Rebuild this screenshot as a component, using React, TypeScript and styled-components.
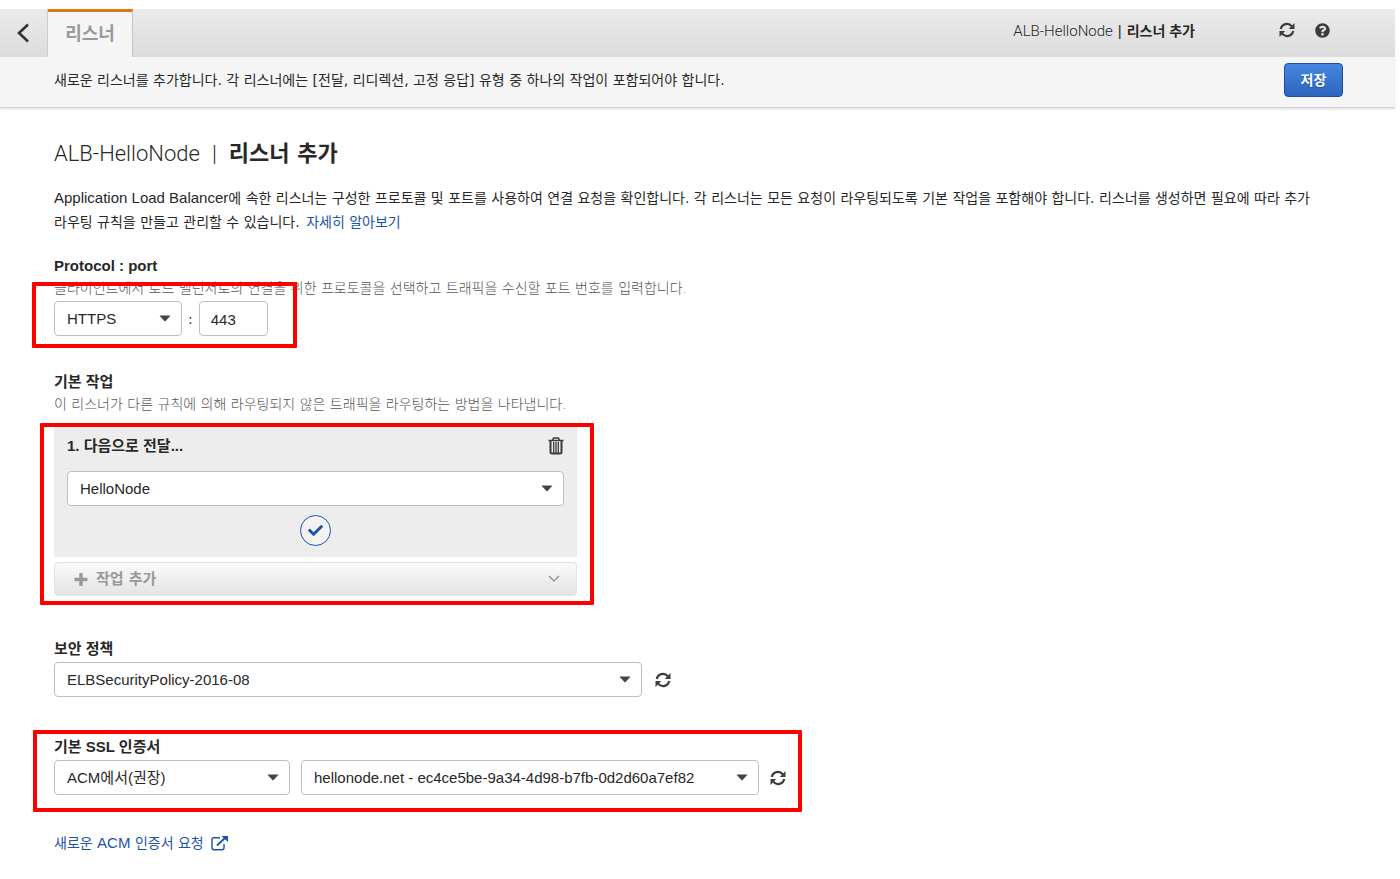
import React from 'react';
import styled, { createGlobalStyle } from 'styled-components';
import { FaQuestionCircle, FaCheck } from 'react-icons/fa';

const FONT = '"DejaVu Sans", "Noto Sans CJK KR", sans-serif';
const LATIN = '"Liberation Sans", "Noto Sans CJK KR", sans-serif';
const THIN = 'Roboto, "Noto Sans CJK KR", sans-serif';
const INK = '#282828';
const LINK = '#1a53ab';

const GlobalStyle = createGlobalStyle`
  * { box-sizing: border-box; }
  body { margin: 0; background: #fff; color: ${INK}; font: 14px/24px ${FONT}; }
  button, input, select { font: inherit; color: inherit; }
  h1, h2, p { margin: 0; }
`;

const Page = styled.div`
  padding: 9px 5px 24px 0;
`;

const TopBar = styled.header`
  display: flex;
  height: 48px;
  background: linear-gradient(#ebebeb, #dcdcdc);
`;

const IconButton = styled.button`
  display: inline-flex;
  align-items: center;
  justify-content: center;
  min-height: 24px;
  padding: 0;
  border: 0;
  background: none;
  color: #3c3c3c;
  cursor: pointer;
`;

const BackButton = styled(IconButton)`
  width: 48px;
  border-right: 1px solid #ccc;
`;

const Tab = styled.a`
  width: 85px;
  padding-top: 8px;
  border-top: 3px solid #d9771a;
  border-right: 1px solid #c4c4c4;
  background: #f5f5f5;
  color: #999;
  font-size: 18px;
  font-weight: 700;
  line-height: 28px;
  text-align: center;
  text-decoration: none;
`;

const Crumb = styled.div`
  display: flex;
  gap: 5px;
  margin: 10px 84px 0 auto;
  font-family: ${LATIN};
  font-size: 15px;
`;

const ThinText = styled.span`
  font-family: ${THIN};
  font-weight: 300;
`;

const CrumbPage = styled.b`
  font-size: 14px;
`;

const TopActions = styled.div`
  display: flex;
  align-items: flex-start;
  gap: 20px;
  padding: 9px 65px 0 0;
`;

const Notice = styled.div`
  display: flex;
  align-items: center;
  justify-content: space-between;
  height: 51px;
  padding: 0 52px 4px 54px;
  border-bottom: 1px solid #d4d4d4;
  background: #f5f5f5;
  box-shadow: 0 1px 2px #ddd;
`;

const SaveButton = styled.button`
  width: 59px;
  height: 34px;
  border: 1px solid #1d4f9c;
  border-radius: 4px;
  background: linear-gradient(#4687e2, #2c65bd);
  color: #fff;
  font-weight: 700;
  text-shadow: 0 1px 1px #1d4f9c;
  cursor: pointer;
`;

const Main = styled.main`
  padding: 30px 56px 0 54px;
`;

const Title = styled.h1`
  display: flex;
  gap: 12px;
  font-size: 22px;
  font-weight: 700;
  line-height: 32px;
`;

const Intro = styled.p`
  margin-top: 16px;
  word-break: keep-all;
`;

const Latin = styled.span`
  font-family: ${LATIN};
  font-size: 15px;
  line-height: 22px;
`;

const Link = styled.a`
  color: ${LINK};
  text-decoration: none;
`;

const LearnMore = styled(Link)`
  margin-left: 2px;
`;

const Section = styled.section<{ $gap: number }>`
  position: relative;
  width: fit-content;
  margin-top: ${(p) => p.$gap}px;
`;

const Heading = styled.h2`
  display: block;
  font-family: ${LATIN};
  font-size: 15px;
  font-weight: 700;
  line-height: 22px;
`;

const Hint = styled.p`
  color: #555;
  font-weight: 300;
  line-height: 22px;
`;

const Marker = styled.div<{ $inset: string; $width?: number }>`
  position: absolute;
  inset: ${(p) => p.$inset};
  width: ${(p) => (p.$width ? `${p.$width}px` : 'auto')};
  border: 4px solid #f00;
  border-radius: 1px;
  pointer-events: none;
`;

const Row = styled.div<{ $gap: number }>`
  display: flex;
  align-items: center;
  gap: ${(p) => p.$gap}px;
  margin-top: 2px;
`;

const SelectBox = styled.span<{ $width: number }>`
  display: grid;
  grid-template: 35px / 1fr;
  align-items: center;
  width: ${(p) => p.$width}px;
  max-width: 100%;
  & > * { grid-area: 1 / 1; }
  & > svg { justify-self: end; margin-right: 11px; pointer-events: none; }
`;

const NativeSelect = styled.select`
  width: 100%;
  height: 100%;
  padding: 0 30px 0 12px;
  border: 1px solid #c0c0c0;
  border-radius: 4px;
  background: #fff;
  font-family: ${LATIN};
  font-size: 15px;
  appearance: none;
`;

const PortInput = styled.input`
  width: 69px;
  height: 35px;
  padding: 2px 11px 0;
  border: 1px solid #c0c0c0;
  border-radius: 4px;
  font-family: ${LATIN};
  font-size: 15px;
`;

const ActionCard = styled.div`
  width: 523px;
  height: 130px;
  margin-top: 12px;
  padding: 7px 13px 0;
  background: #ededed;
`;

const CardHead = styled.div`
  display: flex;
  align-items: flex-start;
  justify-content: space-between;
  height: 37px;
  font-family: ${LATIN};
  font-size: 15px;
  font-weight: 700;
`;

const ConfirmButton = styled.button`
  display: flex;
  align-items: center;
  justify-content: center;
  width: 31px;
  height: 31px;
  margin: 9px auto 0;
  padding: 0;
  border: 1px solid ${LINK};
  border-radius: 50%;
  background: #f3f3f3;
  color: ${LINK};
`;

const AddButton = styled.button`
  display: flex;
  align-items: center;
  gap: 8px;
  width: 523px;
  height: 34px;
  margin-top: 5px;
  padding: 0 16px 0 19px;
  border: 1px solid #e2e2e2;
  border-radius: 4px;
  background: linear-gradient(#fafafa, #e4e4e4);
  color: #999;
  font-size: 15px;
  font-weight: 700;
  & > svg:last-child { margin-left: auto; }
`;

const RequestLink = styled(Link)`
  display: flex;
  align-items: center;
  gap: 7px;
`;

const Refresh = () => (
  <svg width="16" height="16" viewBox="0 0 16 16" fill="none" stroke="currentColor" strokeWidth="2.200" aria-hidden="true">
    <path d="M1.800 7A6.200 6.200 0 0 1 12.800 4.400M14.200 9A6.200 6.200 0 0 1 3.200 11.600" />
    <path d="M15.500 1v6H9.800zM.5 15V9h5.700z" fill="currentColor" stroke="none" />
  </svg>
);

const Caret = () => (
  <svg width="12" height="7" viewBox="0 0 12 7" aria-hidden="true">
    <path d="M1 .5h10q.6 0 .2.6L6.600 6q-.6.6-1.200 0L.8 1.100Q.4.5 1 .5z" fill="#444" />
  </svg>
);

const Plus = () => (
  <svg width="14" height="14" viewBox="0 0 14 14" aria-hidden="true">
    <path d="M7 1v13M.5 7.500h13" stroke="currentColor" strokeWidth="3.400" />
  </svg>
);

const Trash = () => (
  <svg width="16" height="18" viewBox="0 0 16 18" fill="none" stroke="#3c3c3c" aria-hidden="true">
    <path d="M.5 3.500h15M5 3.500V2q0-1 1-1h4q1 0 1 1v1.500" strokeWidth="1.500" />
    <path d="M2.500 4v11q0 1.500 1.500 1.500h8q1.500 0 1.500-1.500V4" strokeWidth="2" />
    <path d="M5.700 5v11M8 5v11M10.300 5v11" strokeWidth="1.300" />
  </svg>
);

const External = () => (
  <svg width="17" height="15" viewBox="0 0 17 15" fill="none" stroke="currentColor" strokeWidth="1.400" aria-hidden="true">
    <path d="M9 1.700H3Q1 1.700 1 3.700v8q0 2 2 2h8q2 0 2-2V8" />
    <path d="M6 9.500l8-7.500" strokeWidth="1.800" />
    <path d="M10.500 0H17v6z" fill="currentColor" stroke="none" />
  </svg>
);

type SelectProps = { id?: string; label?: string; width: number; value: string };

const Select = ({ id, label, width, value }: SelectProps) => (
  <SelectBox $width={width}>
    <NativeSelect id={id} aria-label={label} defaultValue={value}>
      <option>{value}</option>
    </NativeSelect>
    <Caret />
  </SelectBox>
);

export default function App() {
  return (
    <>
      <GlobalStyle />
      <Page>
        <TopBar>
          <BackButton aria-label="뒤로">
            <svg width="16" height="20" viewBox="0 0 16 20" fill="none" stroke="#333" strokeWidth="2.600">
              <path d="M12 1.500L3 10l9 8.500" />
            </svg>
          </BackButton>
          <Tab href="#listeners">리스너</Tab>
          <Crumb>
            <ThinText>ALB-HelloNode</ThinText>
            <span>|</span>
            <CrumbPage>리스너 추가</CrumbPage>
          </Crumb>
          <TopActions>
            <IconButton aria-label="새로 고침"><Refresh /></IconButton>
            <IconButton aria-label="도움말"><FaQuestionCircle size={15} /></IconButton>
          </TopActions>
        </TopBar>
        <Notice>
          <p>새로운 리스너를 추가합니다. 각 리스너에는 [전달, 리디렉션, 고정 응답] 유형 중 하나의 작업이 포함되어야 합니다.</p>
          <SaveButton>저장</SaveButton>
        </Notice>
        <Main>
          <Title>
            <ThinText>ALB-HelloNode</ThinText>
            <ThinText>|</ThinText>
            <span>리스너 추가</span>
          </Title>
          <Intro>
            <Latin>Application Load Balancer</Latin>에 속한 리스너는 구성한 프로토콜 및 포트를 사용하여 연결 요청을 확인합니다. 각 리스너는 모든 요청이 라우팅되도록 기본 작업을 포함해야 합니다. 리스너를 생성하면 필요에 따라 추가 라우팅 규칙을 만들고 관리할 수 있습니다. <LearnMore href="#learn">자세히 알아보기</LearnMore>
          </Intro>

          <Section $gap={21}>
            <Heading>Protocol : port</Heading>
            <Hint>클라이언트에서 로드 밸런서로의 연결을 위한 프로토콜을 선택하고 트래픽을 수신할 포트 번호를 입력합니다.</Hint>
            <Row $gap={6}>
              <Select label="Protocol" width={128} value="HTTPS" />
              <span>:</span>
              <PortInput aria-label="port" defaultValue="443" />
            </Row>
            <Marker $inset="27px auto -12px -22px" $width={265} />
          </Section>

          <Section $gap={35}>
            <Heading>기본 작업</Heading>
            <Hint>이 리스너가 다른 규칙에 의해 라우팅되지 않은 트래픽을 라우팅하는 방법을 나타냅니다.</Hint>
            <ActionCard>
              <CardHead>
                <span>1. 다음으로 전달...</span>
                <IconButton aria-label="삭제"><Trash /></IconButton>
              </CardHead>
              <Select label="대상 그룹" width={497} value="HelloNode" />
              <ConfirmButton aria-label="확인"><FaCheck size={15} /></ConfirmButton>
            </ActionCard>
            <AddButton>
              <Plus />
              작업 추가
              <svg width="12" height="8" viewBox="0 0 12 8" fill="none" stroke="#888" strokeWidth="1.200"><path d="M1 1l5 5 5-5" /></svg>
            </AddButton>
            <Marker $inset="52px -17px -9px -14px" />
          </Section>

          <Section $gap={42}>
            <Heading as="label" htmlFor="policy">보안 정책</Heading>
            <Row $gap={13}>
              <Select id="policy" width={588} value="ELBSecurityPolicy-2016-08" />
              <IconButton aria-label="정책 새로 고침"><Refresh /></IconButton>
            </Row>
          </Section>

          <Section $gap={39}>
            <Heading>기본 SSL 인증서</Heading>
            <Row $gap={11}>
              <Select label="인증서 유형" width={236} value="ACM에서(권장)" />
              <Select label="인증서" width={458} value="hellonode.net - ec4ce5be-9a34-4d98-b7fb-0d2d60a7ef82" />
              <IconButton aria-label="인증서 새로 고침"><Refresh /></IconButton>
            </Row>
            <Marker $inset="-6px -16px -17px -21px" />
          </Section>

          <Section $gap={36}>
            <RequestLink href="#acm">
              <span>새로운 <Latin>ACM</Latin> 인증서 요청</span>
              <External />
            </RequestLink>
          </Section>
        </Main>
      </Page>
    </>
  );
}
